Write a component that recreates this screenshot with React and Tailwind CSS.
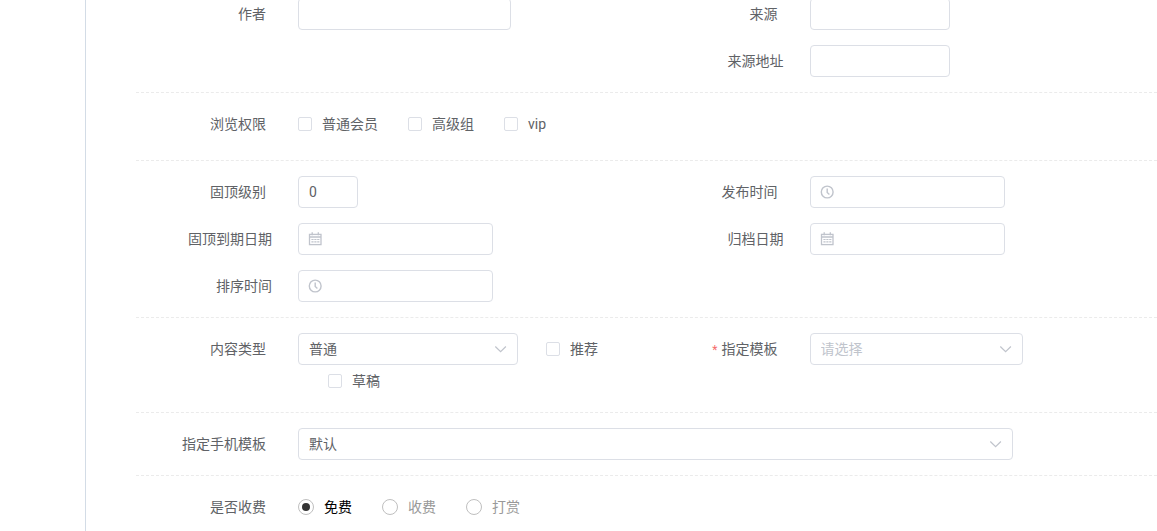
import React, { useState } from 'react';

const inputClass = 'block h-8 rounded border border-[#dcdfe6] bg-white text-sm text-[#606266] outline-none focus:border-[#409eff]';

const ClockIcon = () => (
    <svg viewBox="0 0 14 14" className="w-3.5 h-3.5" fill="none" stroke="currentColor" strokeWidth="1.4">
        <circle cx="7.2" cy="7" r="5.9" />
        <path d="M7.2 3.4V7.4L9.4 9.4" />
    </svg>
);

const CalendarIcon = () => (
    <svg viewBox="0 0 14 14" className="w-3.5 h-3.5" fill="none" stroke="currentColor" strokeWidth="1.3">
        <rect x="1.5" y="2.4" width="11.5" height="10.2" />
        <path d="M1.5 5H13M4.2 0.3V3.2M10.3 0.3V3.2" />
        <path d="M3.4 7.5H11.4M3.4 9.9H11.4" strokeWidth="1.1" strokeDasharray="2.2 0.7" />
    </svg>
);

const ChevronIcon = () => (
    <svg viewBox="0 0 14 14" className="w-3.5 h-3.5" fill="none" stroke="currentColor" strokeWidth="1.2">
        <path d="M1.3 4.5L6.6 9.7L11.9 4.5" />
    </svg>
);

const Section = ({ children }) => (
    <section className="pt-[15px] border-b border-dashed border-[#ebebeb] last:border-b-0">
        {children}
    </section>
);

// Two fields per line
const Columns = ({ children }) => (
    <div className="grid grid-cols-2 gap-x-0.5">{children}</div>
);

const Field = ({ label, htmlFor, required, inset, className = 'mb-[15px]', children }) => (
    <div className={`flex items-start ${className}`}>
        <label
            htmlFor={htmlFor}
            className={`w-[162px] shrink-0 text-right leading-8 ${inset ? 'pr-[26px]' : 'pr-8'}`}
        >
            {required && <span className="mr-1 text-xs text-[#f56c6c]">*</span>}
            {label}
        </label>
        {children}
    </div>
);

const GroupField = ({ label, className = 'mb-[15px]', children }) => (
    <div role="group" aria-label={label} className={`flex items-start ${className}`}>
        <span className="w-[162px] shrink-0 pr-8 text-right leading-8">{label}</span>
        {children}
    </div>
);

const DateInput = ({ id, icon }) => (
    <div className="relative w-[195px]">
        <span className="absolute left-2.5 top-[9px] text-[#c0c4cc] pointer-events-none">{icon}</span>
        <input id={id} type="text" className={`${inputClass} w-full pl-[30px] pr-2.5`} />
    </div>
);

const Select = ({ id, className, placeholder, children, ...props }) => (
    <div className={`relative ${className}`}>
        <select
            id={id}
            className={`${inputClass} w-full appearance-none pl-2.5 pr-8 ${placeholder ? 'text-[#c0c4cc]' : ''}`}
            {...props}
        >
            {children}
        </select>
        <span className="absolute right-2.5 top-[9px] text-[#c0c4cc] pointer-events-none"><ChevronIcon /></span>
    </div>
);

const Checkbox = ({ label, className = '' }) => (
    <label className={`flex items-center gap-2.5 h-8 cursor-pointer ${className}`}>
        <input
            type="checkbox"
            className="w-3.5 h-3.5 appearance-none rounded-xs border border-[#dcdfe6] bg-white checked:bg-[#409eff] checked:border-[#409eff]"
        />
        {label}
    </label>
);

const chargeOptions = ['免费', '收费', '打赏'];

const App = () => {
    const [charge, setCharge] = useState('免费');
    const [template, setTemplate] = useState('');

    return (
        <div className="flex min-h-screen bg-white text-sm text-[#606266] font-[Roboto,'Noto_Sans_CJK_SC',sans-serif]">
            <aside className="w-[86px] shrink-0 border-r border-[#d3dce6]" />

            <main className="flex-1 min-w-0 pl-[50px]">
                <form className="-mt-[17px]">
                    <Section>
                        <Columns>
                            <Field label="作者" htmlFor="author">
                                <input id="author" type="text" className={`${inputClass} w-[213px] px-2.5`} />
                            </Field>
                            <Field label="来源" htmlFor="source">
                                <input id="source" type="text" className={`${inputClass} w-[140px] px-2.5`} />
                            </Field>
                            <div />
                            <Field label="来源地址" htmlFor="sourceUrl" inset>
                                <input id="sourceUrl" type="text" className={`${inputClass} w-[140px] px-2.5`} />
                            </Field>
                        </Columns>
                    </Section>

                    <Section>
                        <GroupField label="浏览权限" className="mb-5">
                            <div className="flex flex-wrap gap-x-[30px]">
                                <Checkbox label="普通会员" />
                                <Checkbox label="高级组" />
                                <Checkbox label="vip" />
                            </div>
                        </GroupField>
                    </Section>

                    <Section>
                        <Columns>
                            <Field label="固顶级别" htmlFor="topLevel">
                                <input id="topLevel" type="text" defaultValue="0" className={`${inputClass} w-[60px] px-2.5`} />
                            </Field>
                            <Field label="发布时间" htmlFor="releaseTime">
                                <DateInput id="releaseTime" icon={<ClockIcon />} />
                            </Field>
                            <Field label="固顶到期日期" htmlFor="topEnd" inset>
                                <DateInput id="topEnd" icon={<CalendarIcon />} />
                            </Field>
                            <Field label="归档日期" htmlFor="archiveDate" inset>
                                <DateInput id="archiveDate" icon={<CalendarIcon />} />
                            </Field>
                            <Field label="排序时间" htmlFor="sortTime" inset>
                                <DateInput id="sortTime" icon={<ClockIcon />} />
                            </Field>
                        </Columns>
                    </Section>

                    <Section>
                        <Columns>
                            <Field label="内容类型" htmlFor="contentType">
                                <div className="flex flex-wrap">
                                    <Select id="contentType" className="w-[220px]">
                                        <option>普通</option>
                                    </Select>
                                    <Checkbox label="推荐" className="ml-7" />
                                    <Checkbox label="草稿" className="ml-[30px]" />
                                </div>
                            </Field>
                            <Field label="指定模板" htmlFor="template" required>
                                <Select
                                    id="template"
                                    className="w-[213px]"
                                    placeholder={!template}
                                    value={template}
                                    onChange={(e) => setTemplate(e.target.value)}
                                >
                                    <option value="">请选择</option>
                                    <option value="default">默认</option>
                                </Select>
                            </Field>
                        </Columns>
                    </Section>

                    <Section>
                        <Field label="指定手机模板" htmlFor="mobileTemplate">
                            <Select id="mobileTemplate" className="w-[70%]">
                                <option>默认</option>
                            </Select>
                        </Field>
                    </Section>

                    <Section>
                        <GroupField label="是否收费" className="">
                            <div className="flex gap-[30px]">
                                {chargeOptions.map((name) => (
                                    <label
                                        key={name}
                                        className={`flex items-center gap-2.5 h-8 cursor-pointer ${charge === name ? 'text-black' : 'text-[#999]'}`}
                                    >
                                        <input
                                            type="radio"
                                            name="charge"
                                            checked={charge === name}
                                            onChange={() => setCharge(name)}
                                            className="grid place-items-center w-4 h-4 appearance-none rounded-full border border-[#bfbfbf] bg-white before:w-2 before:h-2 before:rounded-full checked:before:bg-[#333]"
                                        />
                                        {name}
                                    </label>
                                ))}
                            </div>
                        </GroupField>
                    </Section>
                </form>
            </main>
        </div>
    );
};

export default App;
